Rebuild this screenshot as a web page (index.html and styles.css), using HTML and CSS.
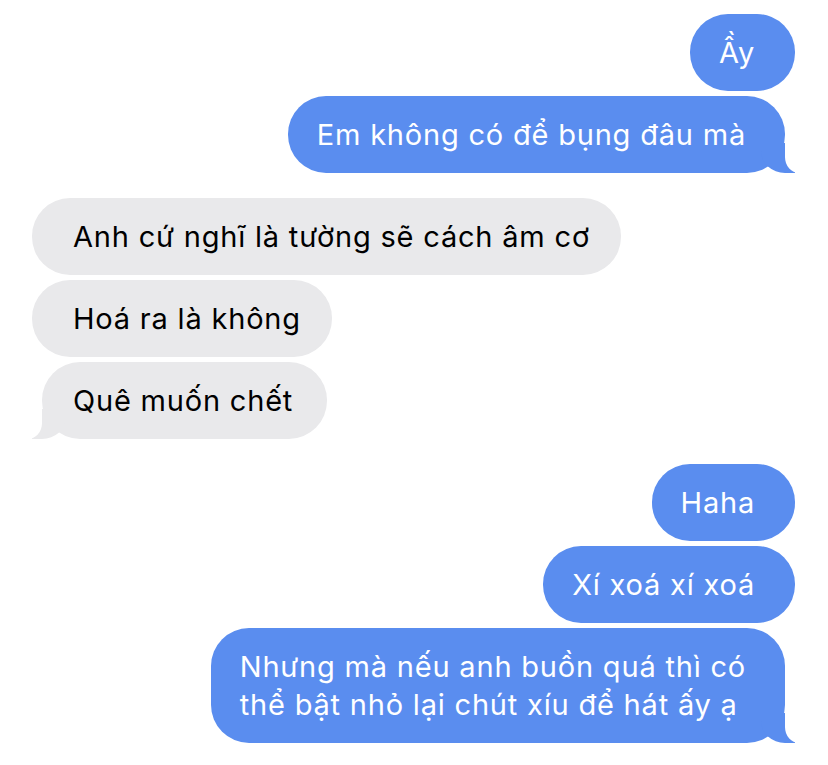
FILE: index.html
```html
<!DOCTYPE html>
<html lang="vi">
<head>
<meta charset="utf-8">
<title>Messages</title>
<link rel="stylesheet" href="styles.css">
</head>
<body>
<main class="thread">
  <section class="group sent">
    <div class="bubble">Ầy</div>
    <div class="bubble tail">Em không có để bụng đâu mà</div>
  </section>
  <section class="group received">
    <div class="bubble">Anh cứ nghĩ là tường sẽ cách âm cơ</div>
    <div class="bubble">Hoá ra là không</div>
    <div class="bubble tail">Quê muốn chết</div>
  </section>
  <section class="group sent">
    <div class="bubble">Haha</div>
    <div class="bubble">Xí xoá xí xoá</div>
    <div class="bubble tail">Nhưng mà nếu anh buồn quá thì có<br>thể bật nhỏ lại chút xíu để hát ấy ạ</div>
  </section>
</main>
</body>
</html>
```
FILE: styles.css
```css
html, body {
  margin: 0;
  padding: 0;
  background: #ffffff;
}
body {
  width: 828px;
  height: 765px;
  overflow: hidden;
  font-family: "Inter", "Noto Sans", sans-serif;
  font-size: 29px;
  letter-spacing: 0.8px;
  line-height: 38px;
}
.thread {
  display: flex;
  flex-direction: column;
  gap: 25px;
  padding: 14px 33px 0 32px;
}
.group {
  display: flex;
  flex-direction: column;
  gap: 5px;
}
.sent { align-items: flex-end; }
.received { align-items: flex-start; }

.bubble {
  position: relative;
  border-radius: 38px;
  padding: 20px 0 19px;
  white-space: nowrap;
}
.sent .bubble {
  background: #5a8def;
  color: #ffffff;
  padding-left: 29px;
  padding-right: 40px;
}
.received .bubble {
  background: #e9e9eb;
  color: #000000;
  padding-left: 41px;
  padding-right: 31px;
}
.sent .bubble.tail {
  margin-right: 10px;
  padding-right: 39px;
}
.received .bubble.tail {
  margin-left: 10px;
  padding-left: 31px;
  padding-right: 34px;
}
.bubble.tail::before,
.bubble.tail::after {
  content: "";
  position: absolute;
  bottom: 0;
  height: 30px;
}
.sent .bubble.tail::before {
  right: -10px;
  width: 34px;
  background: #5a8def;
  border-bottom-left-radius: 24px 22px;
}
.sent .bubble.tail::after {
  right: -24px;
  width: 24px;
  background: #ffffff;
  border-bottom-left-radius: 14px 16px;
}
.received .bubble.tail::before {
  left: -10px;
  width: 34px;
  background: #e9e9eb;
  border-bottom-right-radius: 24px 22px;
}
.received .bubble.tail::after {
  left: -24px;
  width: 24px;
  background: #ffffff;
  border-bottom-right-radius: 14px 16px;
}
```
